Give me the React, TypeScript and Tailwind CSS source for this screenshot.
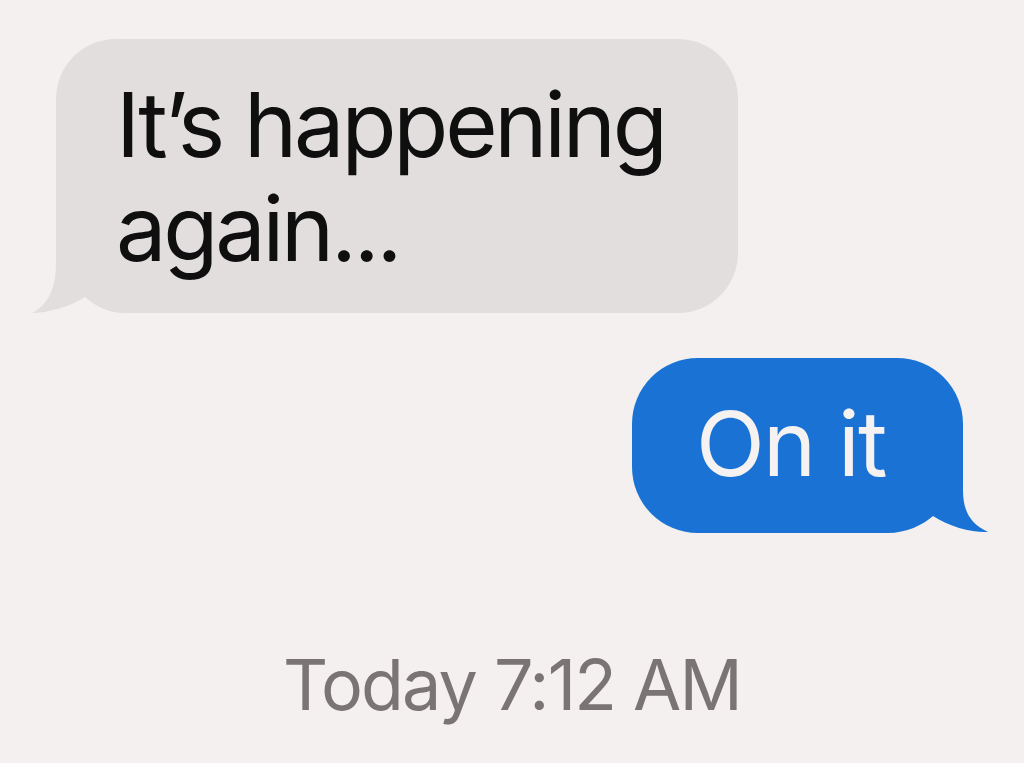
import React from 'react';

const BG = '#f3f0ef';

// tail drawn over the square corner of a bubble; the first rect hides that corner
const TheirTail = () => (
  <svg className="absolute left-[-24px] bottom-0" width="92" height="80" viewBox="0 0 92 80">
    <rect x="24" y="0" width="68" height="80" fill={BG} />
    <path
      d="M24,0 L24,30 C24,55 16,72 0,80 C14,80 38,74 53,64 C63,73 76,80 92,80 L92,0 Z"
      fill="#e2dedd"
    />
  </svg>
);

const MyTail = () => (
  <svg className="absolute right-[-25px] bottom-0" width="100" height="73" viewBox="0 0 100 73">
    <rect x="0" y="0" width="75" height="73" fill={BG} />
    <path
      d="M75,0 L75,30 C75,52 83,64 100,72 C86,73 61,67 45,56 C35,65 18,73 0,73 L0,0 Z"
      fill="#1a73d4"
    />
  </svg>
);

export default function App() {
  return (
    <div
      className="min-h-screen w-full bg-[#f3f0ef] pt-[39px] flex flex-col"
      style={{ fontFamily: 'Inter, "Noto Sans", sans-serif' }}
    >
      <div className="ml-[56px] w-[682px] h-[274px] relative bg-[#e2dedd] rounded-[60px] rounded-bl-none pl-[60px] pt-[34px]">
        <TheirTail />
        <p className="relative text-[90px] leading-[104px] text-[#0f0f0f] tracking-[-0.036em]">
          It’s happening
          <br />
          again...
        </p>
      </div>

      <div className="self-end mr-[61px] mt-[45px] w-[331px] h-[175px] relative bg-[#1a73d4] rounded-[66px] rounded-br-none pl-[64px] pt-[34px]">
        <MyTail />
        <p className="relative text-[90px] leading-[104px] text-[#f5f2f1] tracking-[-0.02em]">On it</p>
      </div>

      <p className="mt-[112px] text-center text-[70px] leading-[80px] text-[#7a7574] tracking-[-0.026em]">
        Today 7:12 AM
      </p>
    </div>
  );
}
